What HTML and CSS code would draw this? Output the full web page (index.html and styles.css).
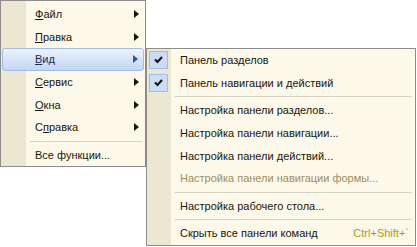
FILE: index.html
```html
<!DOCTYPE html>
<html lang="ru">
<head>
    <meta charset="UTF-8">
    <title>Меню</title>
    <link rel="stylesheet" href="styles.css">
</head>
<body>
    <div class="screen">
        <div class="menu main">
            <div class="item"><span><u>Ф</u>айл</span><i class="arrow"></i></div>
            <div class="item"><span><u>П</u>равка</span><i class="arrow"></i></div>
            <div class="item active"><span><u>В</u>ид</span><i class="arrow"></i></div>
            <div class="item"><span><u>С</u>ервис</span><i class="arrow"></i></div>
            <div class="item"><span><u>О</u>кна</span><i class="arrow"></i></div>
            <div class="item"><span>С<u>п</u>равка</span><i class="arrow"></i></div>
            <div class="sep"></div>
            <div class="item"><span>Все функции...</span></div>
        </div>

        <div class="menu sub">
            <div class="item checked">
                <i class="check"><svg width="17" height="16" viewBox="0 0 17 16"><polyline points="5,7.5 7.5,10 12,5" fill="none" stroke="#1a160a" stroke-width="2.2"/></svg></i>
                <span>Панель разделов</span>
            </div>
            <div class="item checked">
                <i class="check"><svg width="17" height="16" viewBox="0 0 17 16"><polyline points="5,7.5 7.5,10 12,5" fill="none" stroke="#1a160a" stroke-width="2.2"/></svg></i>
                <span>Панель навигации и действий</span>
            </div>
            <div class="sep"></div>
            <div class="item"><span>Настройка панели разделов...</span></div>
            <div class="item"><span>Настройка панели навигации...</span></div>
            <div class="item"><span>Настройка панели действий...</span></div>
            <div class="item disabled"><span>Настройка панели навигации формы...</span></div>
            <div class="sep"></div>
            <div class="item"><span>Настройка рабочего стола...</span></div>
            <div class="sep"></div>
            <div class="item"><span>Скрыть все панели команд</span><span class="key">Ctrl+Shift+`</span></div>
        </div>
    </div>
</body>
</html>
```

FILE: styles.css
```css
body {
    margin: 0;
    background: #ffffff;
    font-family: "Liberation Sans", Arial, sans-serif;
    font-size: 11px;
    color: #1a160a;
}

.screen {
    display: flex;
    align-items: flex-start;
    height: 247px;
}

.menu {
    box-sizing: border-box;
    border: 1px solid #8c8c8c;
    flex: none;
}

.main {
    width: 146px;
    padding: 2px 0 0 0;
    background: linear-gradient(to right, #ece7d0 25px, #fcf9ea 25px);
}

.item {
    display: flex;
    align-items: center;
    height: 22.6px;
    box-sizing: border-box;
    padding-left: 34px;
    white-space: nowrap;
}

.item u {
    text-decoration: underline;
    text-underline-offset: 1px;
}

.arrow {
    margin-left: auto;
    margin-right: 6px;
    width: 0;
    height: 0;
    border-left: 5px solid #1a160a;
    border-top: 4.5px solid transparent;
    border-bottom: 4.5px solid transparent;
}

.main .item.active {
    margin: 0 1px;
    padding-left: 32px;
    border: 1px solid #a3bbe8;
    border-radius: 3px;
    background: linear-gradient(to bottom, #eef4fd, #d2e1f8 60%, #c5d7f5);
    color: #1a2a56;
}

.item.active .arrow {
    border-left-color: #3454a8;
    margin-right: 5px;
}

.sep {
    height: 5px;
    margin: 0 3px 0 29px;
    background: linear-gradient(to bottom, transparent 2px, #d6d2c0 2px, #d6d2c0 3px, transparent 3px);
}

.sub {
    width: 270px;
    margin-top: 48px;
    background: linear-gradient(to right, #ece7d0 24px, #fcf9ea 24px);
}

.sub .item {
    padding-left: 33px;
}

.sub .item.checked {
    padding-left: 2px;
}

.check {
    display: flex;
    align-items: center;
    justify-content: center;
    width: 19px;
    height: 18px;
    box-sizing: border-box;
    margin-right: 12px;
    border: 1px solid #a3bbe8;
    background: #cadcf7;
}

.sub .sep {
    margin: 0 3px 0 28px;
}

.item.disabled {
    color: #a18e5c;
}

.key {
    margin-left: auto;
    margin-right: 6px;
    color: #b3951e;
}
```
